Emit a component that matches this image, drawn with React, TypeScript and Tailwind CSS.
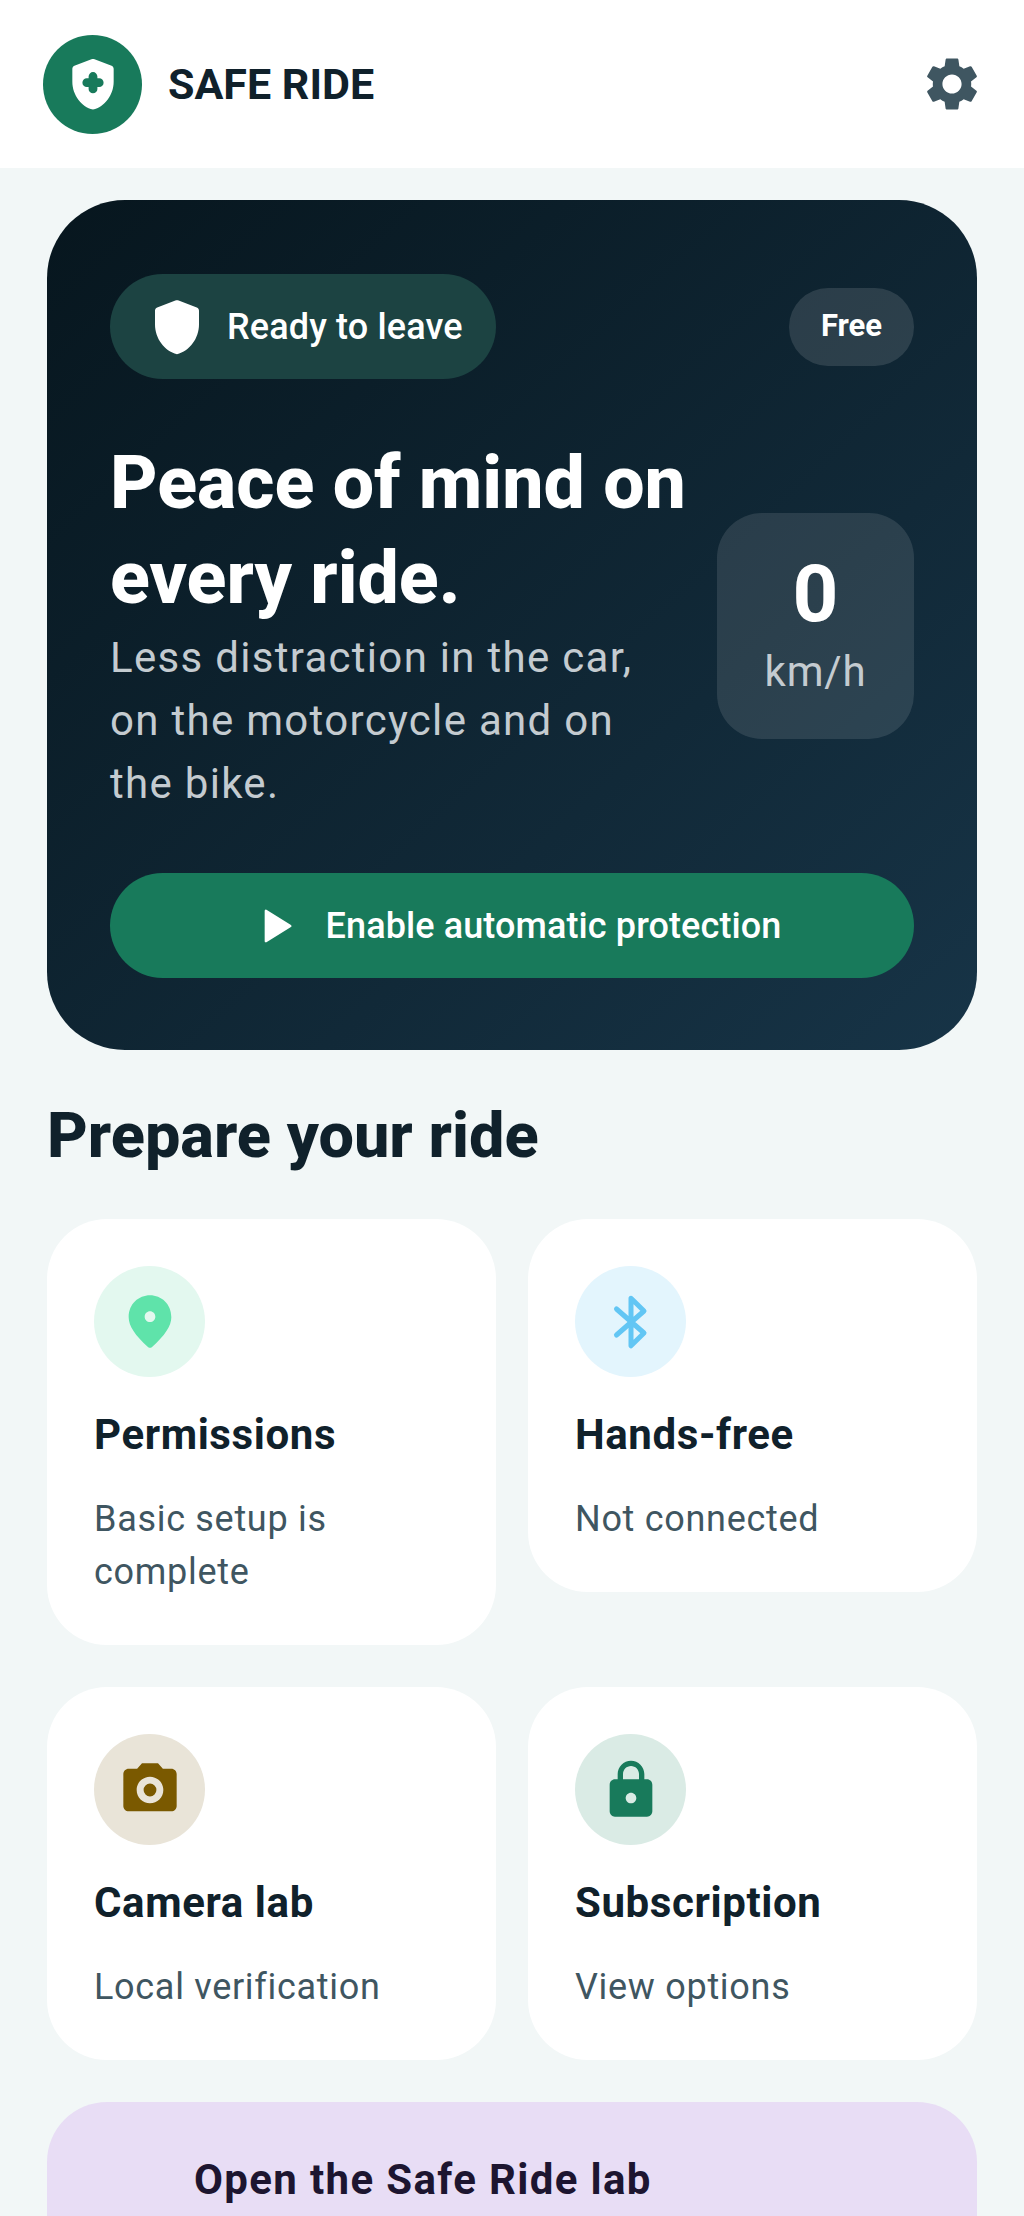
import React from "react";

const Icon = ({ d, className, rule }: { d: string; className: string; rule?: "evenodd" }) => (
  <svg viewBox="0 0 24 24" className={className} fill="currentColor">
    <path d={d} fillRule={rule} />
  </svg>
);

const SHIELD = "M12 2.3c-.2 0-.4 0-.6.1L4.8 4.9c-.5.2-.8.7-.8 1.2v5c0 5 3.4 9.7 8 10.8 4.6-1.1 8-5.8 8-10.8v-5c0-.5-.3-1-.8-1.2l-6.6-2.5c-.2-.1-.4-.1-.6-.1z";
const SETTINGS = "M19.14 12.94c.04-.3.06-.61.06-.94 0-.32-.02-.64-.07-.94l2.03-1.58c.18-.14.23-.41.12-.61l-1.92-3.32c-.12-.22-.37-.29-.59-.22l-2.39.96c-.5-.38-1.03-.7-1.62-.94l-.36-2.54c-.04-.24-.24-.41-.48-.41h-3.84c-.24 0-.43.17-.47.41l-.36 2.54c-.59.24-1.13.57-1.62.94l-2.39-.96c-.22-.08-.47 0-.59.22L2.74 8.87c-.12.21-.08.47.12.61l2.03 1.58c-.05.3-.09.63-.09.94s.02.64.07.94l-2.03 1.58c-.18.14-.23.41-.12.61l1.92 3.32c.12.22.37.29.59.22l2.39-.96c.5.38 1.03.7 1.62.94l.36 2.54c.05.24.24.41.48.41h3.84c.24 0 .44-.17.47-.41l.36-2.54c.59-.24 1.13-.56 1.62-.94l2.39.96c.22.08.47 0 .59-.22l1.92-3.32c.12-.22.07-.47-.12-.61l-2.01-1.58zM12 15.6c-1.98 0-3.6-1.62-3.6-3.6s1.62-3.6 3.6-3.6 3.6 1.62 3.6 3.6-1.62 3.6-3.6 3.6z";
const PIN = "M12 2c-4.2 0-8 3.22-8 8.2 0 3.18 2.45 6.92 7.34 11.23.38.33.95.33 1.33 0C17.55 17.12 20 13.38 20 10.2 20 5.22 16.2 2 12 2zm0 10c-1.1 0-2-.9-2-2s.9-2 2-2 2 .9 2 2-.9 2-2 2z";
const CAMERA = "M9 2 7.17 4H4c-1.1 0-2 .9-2 2v12c0 1.1.9 2 2 2h16c1.1 0 2-.9 2-2V6c0-1.1-.9-2-2-2h-3.17L15 2H9zm3 15c-2.76 0-5-2.24-5-5s2.24-5 5-5 5 2.24 5 5-2.24 5-5 5zm0-2.6a2.4 2.4 0 1 0 0-4.8 2.4 2.4 0 0 0 0 4.8z";
const LOCK = "M18 8h-1V6c0-2.76-2.24-5-5-5S7 3.24 7 6v2H6c-1.1 0-2 .9-2 2v10c0 1.1.9 2 2 2h12c1.1 0 2-.9 2-2V10c0-1.1-.9-2-2-2zm-6 9c-1.1 0-2-.9-2-2s.9-2 2-2 2 .9 2 2-.9 2-2 2zM9 8V6c0-1.66 1.34-3 3-3s3 1.34 3 3v2H9z";

const Bluetooth = ({ className }: { className: string }) => (
  <svg viewBox="0 0 24 24" className={className} fill="none" stroke="currentColor" strokeWidth="2" strokeLinecap="round" strokeLinejoin="round">
    <path d="M6.2 6.8 17.2 16.4 12 21.5V2.5l5.2 5.1L6.2 17.2" />
  </svg>
);

const Card = ({
  icon,
  circle,
  title,
  sub,
}: {
  icon: React.ReactNode;
  circle: string;
  title: string;
  sub: React.ReactNode;
}) => (
  <div className="bg-white rounded-[60px] pt-[47px] px-[47px] pb-[46px]">
    <div className={`w-[111px] h-[111px] rounded-full flex items-center justify-center ${circle}`}>{icon}</div>
    <div className="mt-[30px] text-[42px] leading-[56px] font-bold tracking-[0.6px] text-[#10212B]">{title}</div>
    <div className="mt-[30px] text-[36px] leading-[53px] tracking-[0.7px] text-[#3F5661]">{sub}</div>
  </div>
);

export default function App() {
  return (
    <div className="w-[1024px] h-[2216px] overflow-hidden bg-[#F2F7F7] font-['Roboto',sans-serif]">
      <header className="h-[168px] bg-white flex items-center justify-between pl-[43px] pr-[40px]">
        <div className="flex items-center gap-[26px]">
          <div className="w-[99px] h-[99px] rounded-full bg-[#187A5B] flex items-center justify-center">
            <div className="relative w-[62px] h-[62px] text-white">
              <Icon d={SHIELD} className="w-[62px] h-[62px]" />
              <svg viewBox="0 0 24 24" className="absolute inset-0 w-[62px] h-[62px] text-[#187A5B]" fill="none" stroke="currentColor" strokeWidth="3.4" strokeLinecap="round">
                <path d="M12 9.1v4.8M9.6 11.5h4.8" />
              </svg>
            </div>
          </div>
          <span className="text-[43px] font-bold text-[#10212B]">SAFE RIDE</span>
        </div>
        <Icon d={SETTINGS} className="w-[64px] h-[64px] text-[#3F5661]" />
      </header>

      <main className="px-[47px] pt-[32px]">
        <section className="rounded-[78px] h-[850px] px-[63px] pt-[74px] bg-gradient-to-br from-[#07161E] to-[#173447]">
          <div className="flex items-center justify-between">
            <div className="h-[105px] w-[386px] rounded-full bg-[#1C4342] flex items-center pl-[42px] gap-[17px]">
              <Icon d={SHIELD} className="w-[66px] h-[66px] text-white -ml-[8px]" />
              <span className="text-[36px] font-medium tracking-[0.15px] text-white">Ready to leave</span>
            </div>
            <div className="h-[78px] w-[125px] rounded-full bg-white/[0.12] flex items-center justify-center text-[31px] font-bold text-white">Free</div>
          </div>

          <div className="flex justify-between items-center mt-[57px]">
            <div className="w-[600px]">
              <h1 className="text-[73.5px] leading-[95px] font-extrabold text-white whitespace-nowrap">Peace of mind on<br />every ride.</h1>
              <p className="text-[42px] leading-[63px] tracking-[1.3px] text-[#C4CBD0]">Less distraction in the car,<br />on the motorcycle and on<br />the bike.</p>
            </div>
            <div className="w-[197px] h-[226px] rounded-[45px] bg-white/[0.11] flex flex-col items-center justify-center gap-[7px] pb-[4px]">
              <span className="text-[80px] leading-[90px] font-bold text-white">0</span>
              <span className="text-[42px] leading-[52px] tracking-[0.8px] text-[#C4CBD0]">km/h</span>
            </div>
          </div>

          <button className="mt-[58px] w-full h-[105px] rounded-full bg-[#187A5B] flex items-center justify-center pl-[3px] text-white">
            <svg viewBox="0 0 24 24" className="w-[56px] h-[56px]" fill="currentColor" stroke="currentColor" strokeWidth="1" strokeLinejoin="round">
              <path d="M8.5 5.5v13l10.5-6.5z" />
            </svg>
            <span className="text-[36px] font-medium tracking-[0.1px] ml-[24px]">Enable automatic protection</span>
          </button>
        </section>

        <h2 className="mt-[50px] text-[63px] leading-[72px] font-extrabold text-[#10212B]">Prepare your ride</h2>

        <div className="mt-[47px] grid grid-cols-2 gap-x-[32px] gap-y-[42px] items-start">
          <Card
            circle="bg-[#E3F8EF]"
            icon={<Icon d={PIN} className="w-[64px] h-[64px] text-[#5FE3AA]" />}
            title="Permissions"
            sub={<>Basic setup is<br />complete</>}
          />
          <Card
            circle="bg-[#E3F5FD]"
            icon={<Bluetooth className="w-[60px] h-[60px] text-[#62C6F4]" />}
            title="Hands-free"
            sub="Not connected"
          />
          <Card
            circle="bg-[#E9E4D8]"
            icon={<Icon d={CAMERA} className="w-[64px] h-[64px] text-[#7A5900]" rule="evenodd" />}
            title="Camera lab"
            sub="Local verification"
          />
          <Card
            circle="bg-[#DAEBE5]"
            icon={<Icon d={LOCK} className="w-[64px] h-[64px] text-[#187A5B]" rule="evenodd" />}
            title="Subscription"
            sub="View options"
          />
        </div>

        <section className="mt-[42px] h-[300px] rounded-t-[60px] bg-[#E8DDF5] pl-[147px] pt-[50px]">
          <div className="text-[42px] leading-[56px] font-bold tracking-[1.35px] text-[#1D1530]">Open the Safe Ride lab</div>
        </section>
      </main>
    </div>
  );
}
